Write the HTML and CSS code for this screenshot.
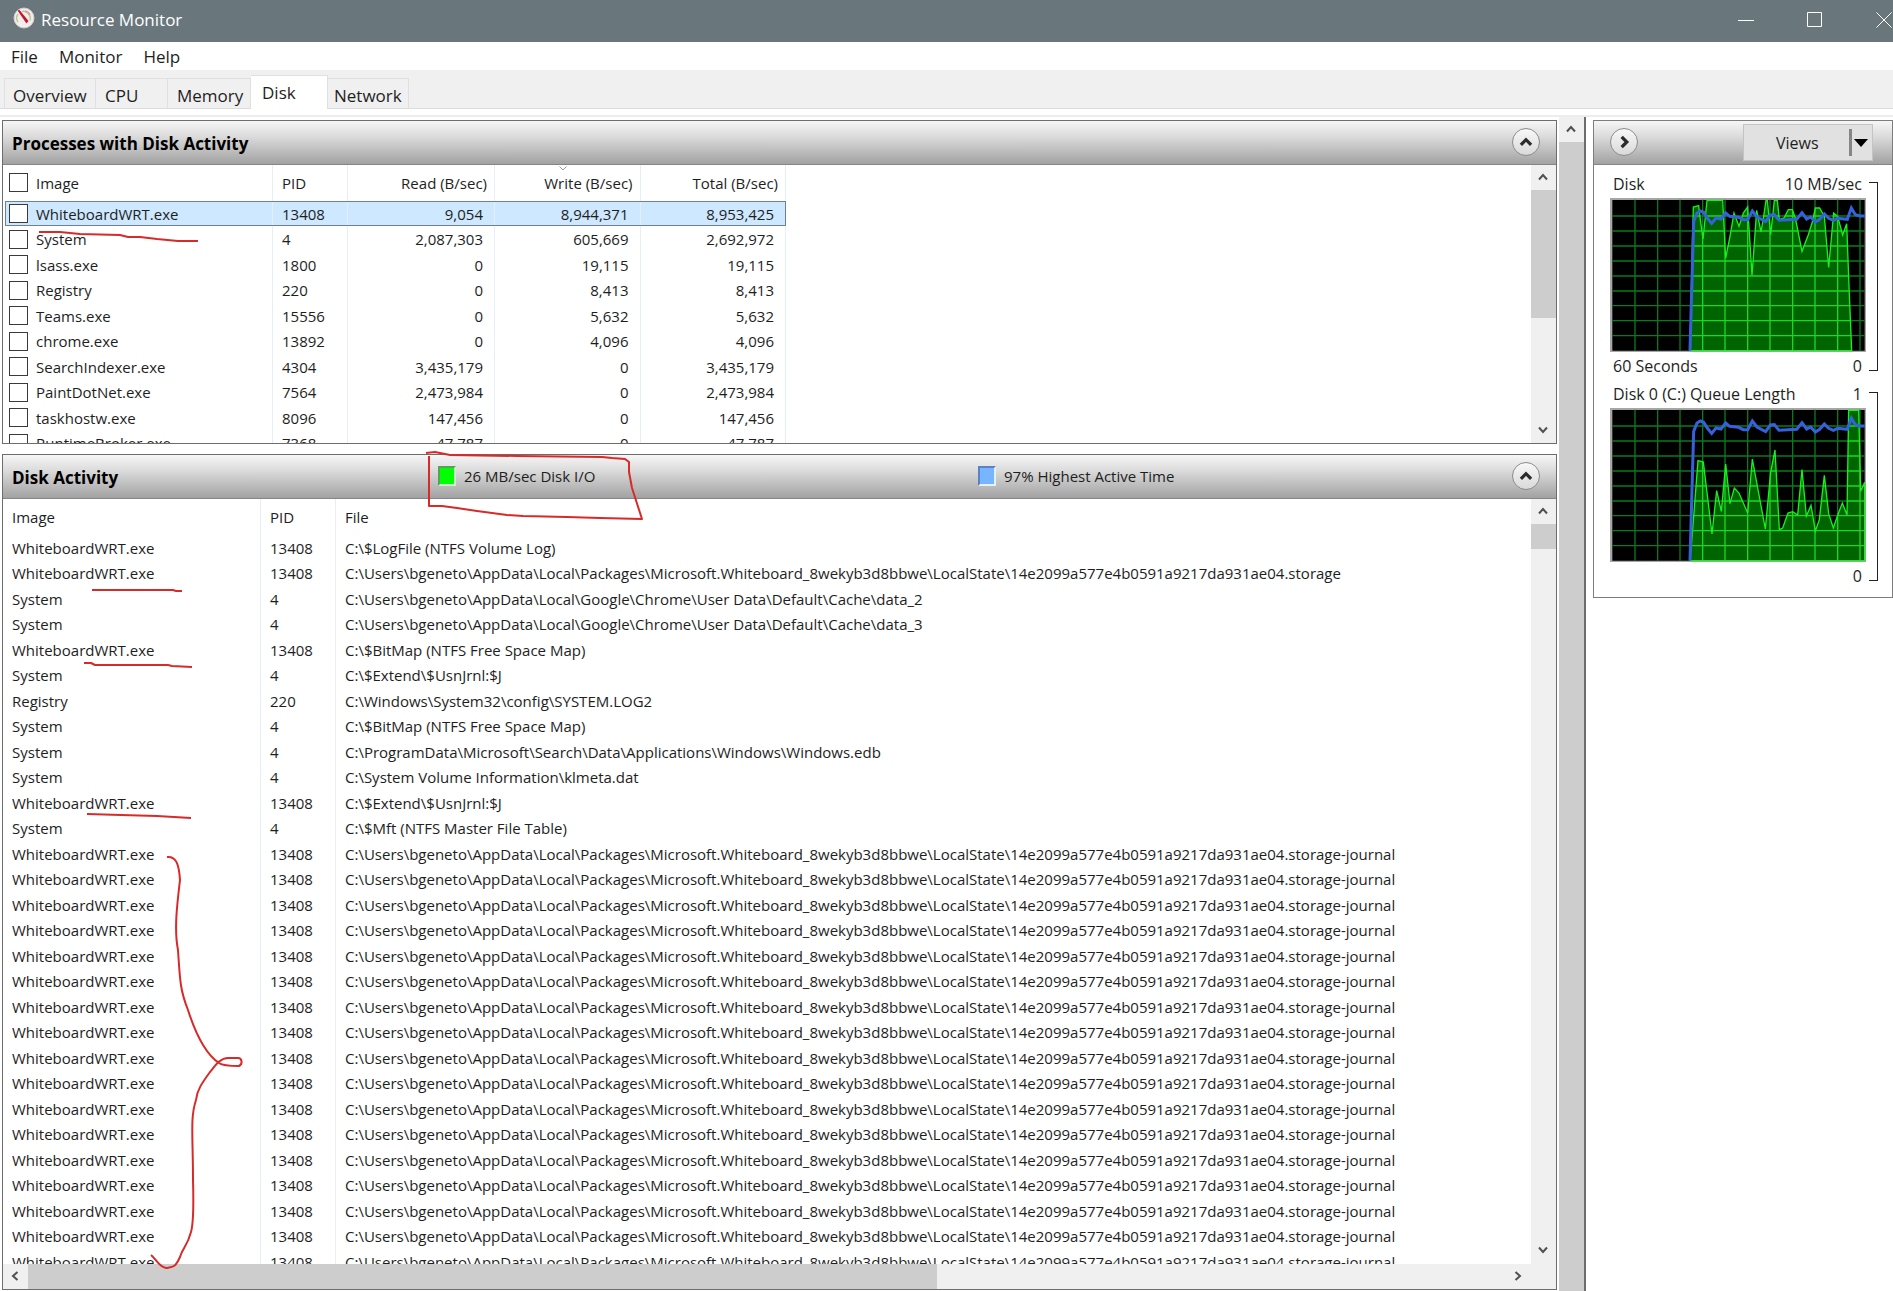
FILE: index.html
```html
<!DOCTYPE html>
<html lang="en">
<head>
<meta charset="utf-8">
<title>Resource Monitor</title>
<link rel="stylesheet" href="styles.css">
</head>
<body>
<svg class="defs" aria-hidden="true">
  <symbol id="chev-up" viewBox="0 0 12 12"><path d="M2 8.500 6 4l4 4.500" fill="none" stroke="#505050" stroke-width="2"/></symbol>
  <symbol id="chev-down" viewBox="0 0 12 12"><path d="M2 3.500 6 8l4-4.500" fill="none" stroke="#505050" stroke-width="2"/></symbol>
  <symbol id="chev-left" viewBox="0 0 12 12"><path d="M8.500 2 4 6l4.500 4" fill="none" stroke="#505050" stroke-width="2"/></symbol>
  <symbol id="chev-right" viewBox="0 0 12 12"><path d="M3.500 2 8 6l-4.500 4" fill="none" stroke="#505050" stroke-width="2"/></symbol>
  <symbol id="fold" viewBox="0 0 28 28"><path d="M8.500 17 14 11.500 19.500 17" fill="none" stroke="#2b2b2b" stroke-width="3.500"/></symbol>
  <symbol id="unfold" viewBox="0 0 28 28"><path d="M11.500 8.500 17 14l-5.500 5.500" fill="none" stroke="#2b2b2b" stroke-width="3.500"/></symbol>
</svg>

<header class="titlebar">
  <svg class="app-icon" viewBox="0 0 22 22"><circle cx="11" cy="11" r="10" fill="#f3eeee" stroke="#d3cccb" stroke-width="1"/><path d="M5 15a7 7 0 0 1 0-8M9 4.500a7 7 0 0 1 8 9" fill="none" stroke="#b9c98f" stroke-width="1.500"/><path d="M12 4a7 7 0 0 1 5 4" fill="none" stroke="#d8a0a0" stroke-width="1.500"/><path d="m4.500 3.500 2-.5 9 11-2 2.500z" fill="#c4162a"/></svg>
  <h1 class="title">Resource Monitor</h1>
  <div class="caption">
    <button aria-label="Minimize"><svg width="16" height="16"><path d="M0 8.500h16" stroke="#fff"/></svg></button>
    <button aria-label="Maximize"><svg width="16" height="16"><path d="M.5.5h14v14H.5z" fill="none" stroke="#fff"/></svg></button>
    <button aria-label="Close"><svg width="16" height="16"><path d="m.5.5 15 15m0-15-15 15" stroke="#fff"/></svg></button>
  </div>
</header>

<nav class="menu"><button>File</button><button>Monitor</button><button>Help</button></nav>

<div class="tabs" role="tablist">
  <button class="tab tab-overview" role="tab">Overview</button>
  <button class="tab tab-cpu" role="tab">CPU</button>
  <button class="tab tab-memory" role="tab">Memory</button>
  <button class="tab tab-disk active" role="tab" aria-selected="true">Disk</button>
  <button class="tab tab-network" role="tab">Network</button>
</div>
<div class="tab-edge"></div>

<main class="workspace">
  <div class="panels">
    <section class="panel processes">
      <header class="panel-head">
        <h2>Processes with Disk Activity</h2>
        <button class="round" aria-label="Collapse processes"><svg><use href="#fold"/></svg></button>
      </header>
      <div class="panel-body">
        <div class="clip">
          <table class="grid proc-grid">
            <colgroup><col class="c-image"><col class="c-pid"><col class="c-read"><col class="c-rate"><col class="c-rate"></colgroup>
            <thead><tr>
              <th><label class="pick"><input type="checkbox"><span>Image</span></label></th>
              <th>PID</th><th class="num">Read (B/sec)</th>
              <th class="num sorted">Write (B/sec)<svg class="sort" width="8" height="5"><path d="m.5.5 3.500 3.500L7.500.5" fill="none" stroke="#999"/></svg></th>
              <th class="num">Total (B/sec)</th>
            </tr></thead>
            <tbody id="processes"></tbody>
          </table>
        </div>
        <div class="vbar">
          <button aria-label="Scroll up"><svg><use href="#chev-up"/></svg></button>
          <div class="track"><div class="thumb thumb-proc"></div></div>
          <button aria-label="Scroll down"><svg><use href="#chev-down"/></svg></button>
        </div>
      </div>
    </section>

    <section class="panel activity">
      <header class="panel-head">
        <h2>Disk Activity</h2>
        <p class="legend"><i class="swatch io"></i>26 MB/sec Disk I/O</p>
        <p class="legend"><i class="swatch busy"></i>97% Highest Active Time</p>
        <button class="round" aria-label="Collapse disk activity"><svg><use href="#fold"/></svg></button>
      </header>
      <div class="panel-body">
        <div class="stack">
          <div class="clip">
            <table class="grid file-grid">
              <colgroup><col class="c-name"><col class="c-id"><col></colgroup>
              <thead><tr><th>Image</th><th>PID</th><th>File</th></tr></thead>
              <tbody id="files"></tbody>
            </table>
          </div>
          <div class="hbar">
            <button aria-label="Scroll left"><svg><use href="#chev-left"/></svg></button>
            <div class="track"><div class="thumb"></div></div>
            <button aria-label="Scroll right"><svg><use href="#chev-right"/></svg></button>
          </div>
        </div>
        <div class="vbar">
          <button aria-label="Scroll up"><svg><use href="#chev-up"/></svg></button>
          <div class="track"><div class="thumb thumb-file"></div></div>
          <button aria-label="Scroll down"><svg><use href="#chev-down"/></svg></button>
          <div class="corner"></div>
        </div>
      </div>
    </section>
  </div>

  <div class="vbar outer">
    <button aria-label="Scroll page up"><svg><use href="#chev-up"/></svg></button>
    <div class="track"><div class="thumb"></div></div>
  </div>

  <aside class="side">
    <header class="panel-head side-head">
      <button class="round" aria-label="Hide charts"><svg><use href="#unfold"/></svg></button>
      <button class="views"><span>Views</span><i class="divider"></i><svg width="14" height="8"><path d="M0 0h14L7 8z"/></svg></button>
    </header>
    <div class="charts">
      <figure class="chart">
        <figcaption>Disk</figcaption><span class="max">10 MB/sec</span>
        <svg class="plot" viewBox="150 595 768 462" preserveAspectRatio="none">
          <defs><clipPath id="a1"><path id="p1" d="M390 1053 398 700 400 622 416 618 421 660 429 718 441 602H488L497 775 510 710 522 640 537 680 550 640 563 622 568 700 576 827 590 632 603 697 611 650 618 602H622L632 705 643 602H652L658 660 672 655 685 630H697L706 655 726 755 745 705 757 667 766 625H779L793 650 806 803 821 640 833 650 848 706 860 672 867 860 875 1053z"/></clipPath>
          <path id="lines" d="M225 600V1053M293 600V1053M360 600V1053M428 600V1053M495 600V1053M563 600V1053M630 600V1053M698 600V1053M765 600V1053M833 600V1053M900 600V1053M157 649H914M157 694H914M157 739H914M157 784H914M157 829H914M157 874H914M157 918H914M157 963H914M157 1008H914"/></defs>
          <path d="M150 595h768v462H150z" fill="#a6a6a6"/><path d="M157 601h757v452H157z"/>
          <use href="#lines" stroke="#0b7a1d" stroke-width="4"/>
          <use href="#p1" fill="#006400"/>
          <use href="#lines" stroke="#1cd822" stroke-width="4" clip-path="url(#a1)"/>
          <use href="#p1" fill="none" stroke="#17f01d" stroke-width="4"/>
          <path id="busy" d="M390 1053 401 665 411 640 421 634 431 638 442 655 455 671 468 655 483 658 497 640 509 650 536 653 550 660H563L577 634 591 652 617 666 631 646 643 645 657 662 710 659 726 639 740 658 752 652 766 667 779 659 793 643 806 656 820 662 833 656 862 659 874 625 886 645 900 649H914" fill="none" stroke="#3562dc" stroke-width="9"/>
        </svg>
        <span class="span">60 Seconds</span><span class="min">0</span>
        <i class="bracket"></i>
      </figure>
      <figure class="chart">
        <figcaption>Disk 0 (C:) Queue Length</figcaption><span class="max">1</span>
        <svg class="plot" viewBox="150 595 768 462" preserveAspectRatio="none">
          <defs><clipPath id="a2"><path id="p2" d="M390 1053 398 960 414 753 430 757 456 973 470 843 484 905 497 763 510 882 523 835 537 850 563 910 577 748 616 958 632 787 645 721 658 960 668 955 684 910 698 906 713 916 726 780 739 919 753 887 766 964 778 930 793 797 806 912 820 955 834 914 847 880 861 916 866 602H896L902 845 914 818V1053z"/></clipPath></defs>
          <path d="M150 595h768v462H150z" fill="#a6a6a6"/><path d="M157 601h757v452H157z"/>
          <use href="#lines" stroke="#0b7a1d" stroke-width="4"/>
          <use href="#p2" fill="#006400"/>
          <use href="#lines" stroke="#1cd822" stroke-width="4" clip-path="url(#a2)"/>
          <use href="#p2" fill="none" stroke="#17f01d" stroke-width="4"/>
          <use href="#busy"/>
        </svg>
        <span class="min">0</span>
        <i class="bracket"></i>
      </figure>
    </div>
  </aside>
</main>

<svg class="ink" width="660" height="1291" aria-hidden="true">
  <path d="M39 232H60L80 234 120 235 128 237H140L157 239 178 241H198M87 814 121 815 157 816 191 818"/>
  <path d="M426 453 435 452 450 455 517 456 602 457 612 458 625 459 629 462V472L632 488 642 519 600 518 567 517 523 516 507 515 477 511 457 508 442 506 429 506V456"/>
  <path d="M92 590H173L176 591H182M84 663H91L95 665H168L172 666 192 667"/>
  <path d="M167 857C176 856 179 864 180 880 177 905 174 930 178 950 180 980 180 990 188 1010 196 1035 207 1055 219 1063 223 1066 232 1066 239 1066 243 1064 242 1058 238 1058H228C220 1058 215 1066 210 1072 202 1083 197 1090 196 1100 190 1118 193 1135 193 1180 194 1215 193 1225 191 1232 187 1247 183 1247 180 1257 175 1268 173 1267 166 1268 159 1267 156 1259 151 1255"/>
</svg>
<script src="script.js"></script>
</body>
</html>
```
FILE: styles.css
```css
* { box-sizing: border-box; }

body {
  margin: 0;
  height: 100vh;
  min-height: 640px;
  display: flex;
  flex-direction: column;
  overflow: hidden;
  position: relative;
  background: #fff;
  color: #1e1e1e;
  font: 16px/20px "Open Sans", "Noto Sans", sans-serif;
}

h1, h2, p, figure { margin: 0; }

button {
  border: 0;
  padding: 0;
  background: none;
  color: inherit;
  font: inherit;
}

.defs { position: absolute; width: 0; height: 0; }

/* Title bar */
.titlebar {
  display: flex;
  align-items: center;
  flex: none;
  height: 42px;
  padding-left: 13px;
  background: #69777d;
  color: #fff;
  overflow: hidden;
}
.app-icon { width: 22px; height: 22px; margin-bottom: 6px; }
.title { flex: 1; margin-left: 6px; padding-bottom: 3px; font-size: 17px; font-weight: 400; }
.caption { display: flex; margin-right: -25px; }
.caption button { width: 69px; height: 38px; padding-bottom: 2px; display: grid; place-items: center; }

/* Menu and tabs */
.menu { display: flex; flex: none; gap: 21px; height: 28px; padding: 1px 0 0 11px; font-size: 17px; }

.tabs {
  display: flex;
  flex: none;
  align-items: flex-end;
  height: 39px;
  padding-left: 4px;
  background: #f0f0f0;
  border-bottom: 1px solid #dcdcdc;
  font-size: 17px;
}
.tab {
  height: 30px;
  padding: 4px 0 0 9px;
  border: 1px solid #e0e0e0;
  border-left-width: 0;
  border-bottom: 0;
  text-align: left;
}
.tab-overview { width: 92px; padding-left: 8px; border-left-width: 1px; }
.tab-cpu { width: 72px; }
.tab-memory { width: 83px; }
.tab-disk { width: 77px; }
.tab-network { width: 81px; padding-left: 6px; }
.tab.active { height: 34px; margin-bottom: -1px; padding: 0 0 0 11px; background: #fff; }
.tab-edge { flex: none; height: 8px; border-bottom: 2px solid #ededed; }

/* Work area */
.workspace { display: flex; flex: 1; min-height: 0; padding-left: 2px; }
.panels { display: flex; flex: 1; flex-direction: column; gap: 10px; min-width: 0; padding: 3px 2px 1px 0; }
.panel { display: flex; flex-direction: column; border: 1px solid #6d6d6d; min-height: 0; }
.processes { flex: none; height: 324px; }
.activity { flex: 1; }

.panel-head {
  display: flex;
  flex: none;
  align-items: center;
  justify-content: space-between;
  height: 44px;
  padding: 0 16px 1px 9px;
  border-bottom: 1px solid #858585;
  background: linear-gradient(#f6f6f6, #dcdcdc 35%, #a2a2a2);
}
.panel-head h2 { padding-top: 3px; color: #000; font-size: 17px; font-weight: 700; }
.activity .panel-head { display: grid; grid-template-columns: 426px 540px 1fr auto; }

.round {
  width: 28px;
  height: 28px;
  border: 1px solid #8c8c8c;
  border-radius: 50%;
  background: linear-gradient(#f8f8f8, #d9d9d9);
}
.round svg { display: block; width: 26px; height: 26px; }

.legend { display: flex; align-items: center; gap: 8px; font-size: 15px; }
.swatch { width: 18px; height: 20px; border: 2px solid; }
.io { background: #00ff00; border-color: #5aa05a #c8f5c8 #c8f5c8 #5aa05a; }
.busy { background: #78b4ff; border-color: #5b82c4 #e2f0ff #e2f0ff #5b82c4; }

.panel-body { display: flex; flex: 1; min-height: 0; }
.stack { display: flex; flex: 1; flex-direction: column; min-width: 0; }
.clip { flex: 1; min-width: 0; min-height: 0; overflow: hidden; }

/* Tables */
.grid { border-collapse: separate; border-spacing: 0; table-layout: fixed; white-space: nowrap; font-size: 15px; }
.grid th { height: 36px; font-weight: 400; text-align: left; }
.grid td { height: 25px; }
.grid tr:nth-child(even) td { height: 26px; }
.grid th, .grid td { padding: 0 9px; border-right: 1px solid #e6eff6; }
.grid th { padding-bottom: 1px; }
.grid .num { text-align: right; }
.grid td.num { padding-right: 11px; }
.grid th.num { padding-right: 7px; }

.proc-grid { width: 781px; margin-left: 2px; }
.c-image { width: 268px; }
.c-pid { width: 75px; }
.c-read { width: 147px; }
.proc-grid th:first-child, .proc-grid td:first-child { padding-left: 4px; }
.proc-grid .selected { outline: 1px solid #6b8296; outline-offset: -1px; background: #cde8ff; }
.sorted { position: relative; }
.sort { position: absolute; top: 1px; right: 50%; }

.pick { display: flex; align-items: center; gap: 8px; }
.pick input {
  appearance: none;
  flex: none;
  width: 19px;
  height: 19px;
  margin: 0;
  border: 1px solid #3a3a3a;
  background: #fff;
}

.file-grid { width: 100%; }
.c-name { width: 258px; }
.c-id { width: 75px; }
.file-grid th:last-child, .file-grid td:last-child { border-right: 0; }

/* Scroll bars */
.vbar { display: flex; flex: none; flex-direction: column; width: 25px; background: #f0f0f0; }
.vbar button, .hbar button { flex: none; display: grid; place-items: center; width: 25px; height: 25px; padding: 0 2px 1px 0; }
.vbar svg, .hbar svg { width: 12px; height: 12px; }
.track { flex: 1; min-width: 0; min-height: 0; }
.thumb { height: 100%; background: #cdcdcd; }
.thumb-proc { height: 56%; }
.thumb-file { height: 25px; }
.corner { height: 26px; }
.hbar { display: flex; flex: none; height: 25px; background: #f0f0f0; }
.hbar .thumb { width: 61.5%; }
.outer { width: 27px; border-right: 2px solid #6d6d6d; }

/* Chart column */
.side { flex: none; align-self: flex-start; width: 300px; margin: 3px 0 0 7px; border: 1px solid #7d7d7d; }
.side-head { padding: 0 19px 1px 16px; }
.views { display: flex; align-items: center; width: 130px; height: 37px; padding: 1px 4px 0 32px; border: 1px solid #c4c4c4; background: #e1e1e1; font-size: 16px; }
.views span { flex: 1; text-align: left; }
.divider { width: 3px; height: 27px; margin-right: 2px; background: #868686; }

.charts { padding: 5px 14px 7px 16px; }
.chart {
  display: grid;
  grid-template-columns: 1fr auto 12px;
  grid-template-rows: 28px 154px 28px;
  align-items: center;
  font-size: 16px;
}
.chart figcaption, .span { padding-left: 3px; }
.max, .min { grid-column: 2; padding-right: 4px; text-align: right; }
.plot { grid-column: 1 / 3; width: 100%; height: 154px; }
.span { grid-row: 3; }
.min { grid-row: 3; }
.bracket {
  grid-column: 3;
  grid-row: 1 / 4;
  align-self: stretch;
  margin: 12px 0 9px 3px;
  border: 1px solid #222;
  border-left: 0;
}

/* Hand-drawn marks over the window */
.ink { position: absolute; top: 0; left: 0; pointer-events: none; }
.ink path { fill: none; stroke: #d92a2a; stroke-width: 2; stroke-linejoin: round; }
```
FILE: script.js
```js
const processes = [
  ["WhiteboardWRT.exe", 13408, "9,054", "8,944,371", "8,953,425"],
  ["System", 4, "2,087,303", "605,669", "2,692,972"],
  ["lsass.exe", 1800, "0", "19,115", "19,115"],
  ["Registry", 220, "0", "8,413", "8,413"],
  ["Teams.exe", 15556, "0", "5,632", "5,632"],
  ["chrome.exe", 13892, "0", "4,096", "4,096"],
  ["SearchIndexer.exe", 4304, "3,435,179", "0", "3,435,179"],
  ["PaintDotNet.exe", 7564, "2,473,984", "0", "2,473,984"],
  ["taskhostw.exe", 8096, "147,456", "0", "147,456"],
  ["RuntimeBroker.exe", 7368, "47,787", "0", "47,787"],
];

const user = "C:\\Users\\bgeneto\\AppData\\Local\\";
const store = user + "Packages\\Microsoft.Whiteboard_8wekyb3d8bbwe\\LocalState\\14e2099a577e4b0591a9217da931ae04.storage";
const board = ["WhiteboardWRT.exe", 13408];
const system = ["System", 4];

const files = [
  [...board, "C:\\$LogFile (NTFS Volume Log)"],
  [...board, store],
  [...system, user + "Google\\Chrome\\User Data\\Default\\Cache\\data_2"],
  [...system, user + "Google\\Chrome\\User Data\\Default\\Cache\\data_3"],
  [...board, "C:\\$BitMap (NTFS Free Space Map)"],
  [...system, "C:\\$Extend\\$UsnJrnl:$J"],
  ["Registry", 220, "C:\\Windows\\System32\\config\\SYSTEM.LOG2"],
  [...system, "C:\\$BitMap (NTFS Free Space Map)"],
  [...system, "C:\\ProgramData\\Microsoft\\Search\\Data\\Applications\\Windows\\Windows.edb"],
  [...system, "C:\\System Volume Information\\klmeta.dat"],
  [...board, "C:\\$Extend\\$UsnJrnl:$J"],
  [...system, "C:\\$Mft (NTFS Master File Table)"],
  ...Array.from({ length: 17 }, () => [...board, store + "-journal"]),
];

document.getElementById("processes").innerHTML = processes.map(([name, pid, ...rates], i) =>
  `<tr${i === 0 ? ' class="selected"' : ""}><td><label class="pick"><input type="checkbox"><span>${name}</span></label></td><td>${pid}</td>${rates.map(r => `<td class="num">${r}</td>`).join("")}</tr>`
).join("");

document.getElementById("files").innerHTML = files.map(row =>
  `<tr>${row.map(cell => `<td>${cell}</td>`).join("")}</tr>`
).join("");
```
